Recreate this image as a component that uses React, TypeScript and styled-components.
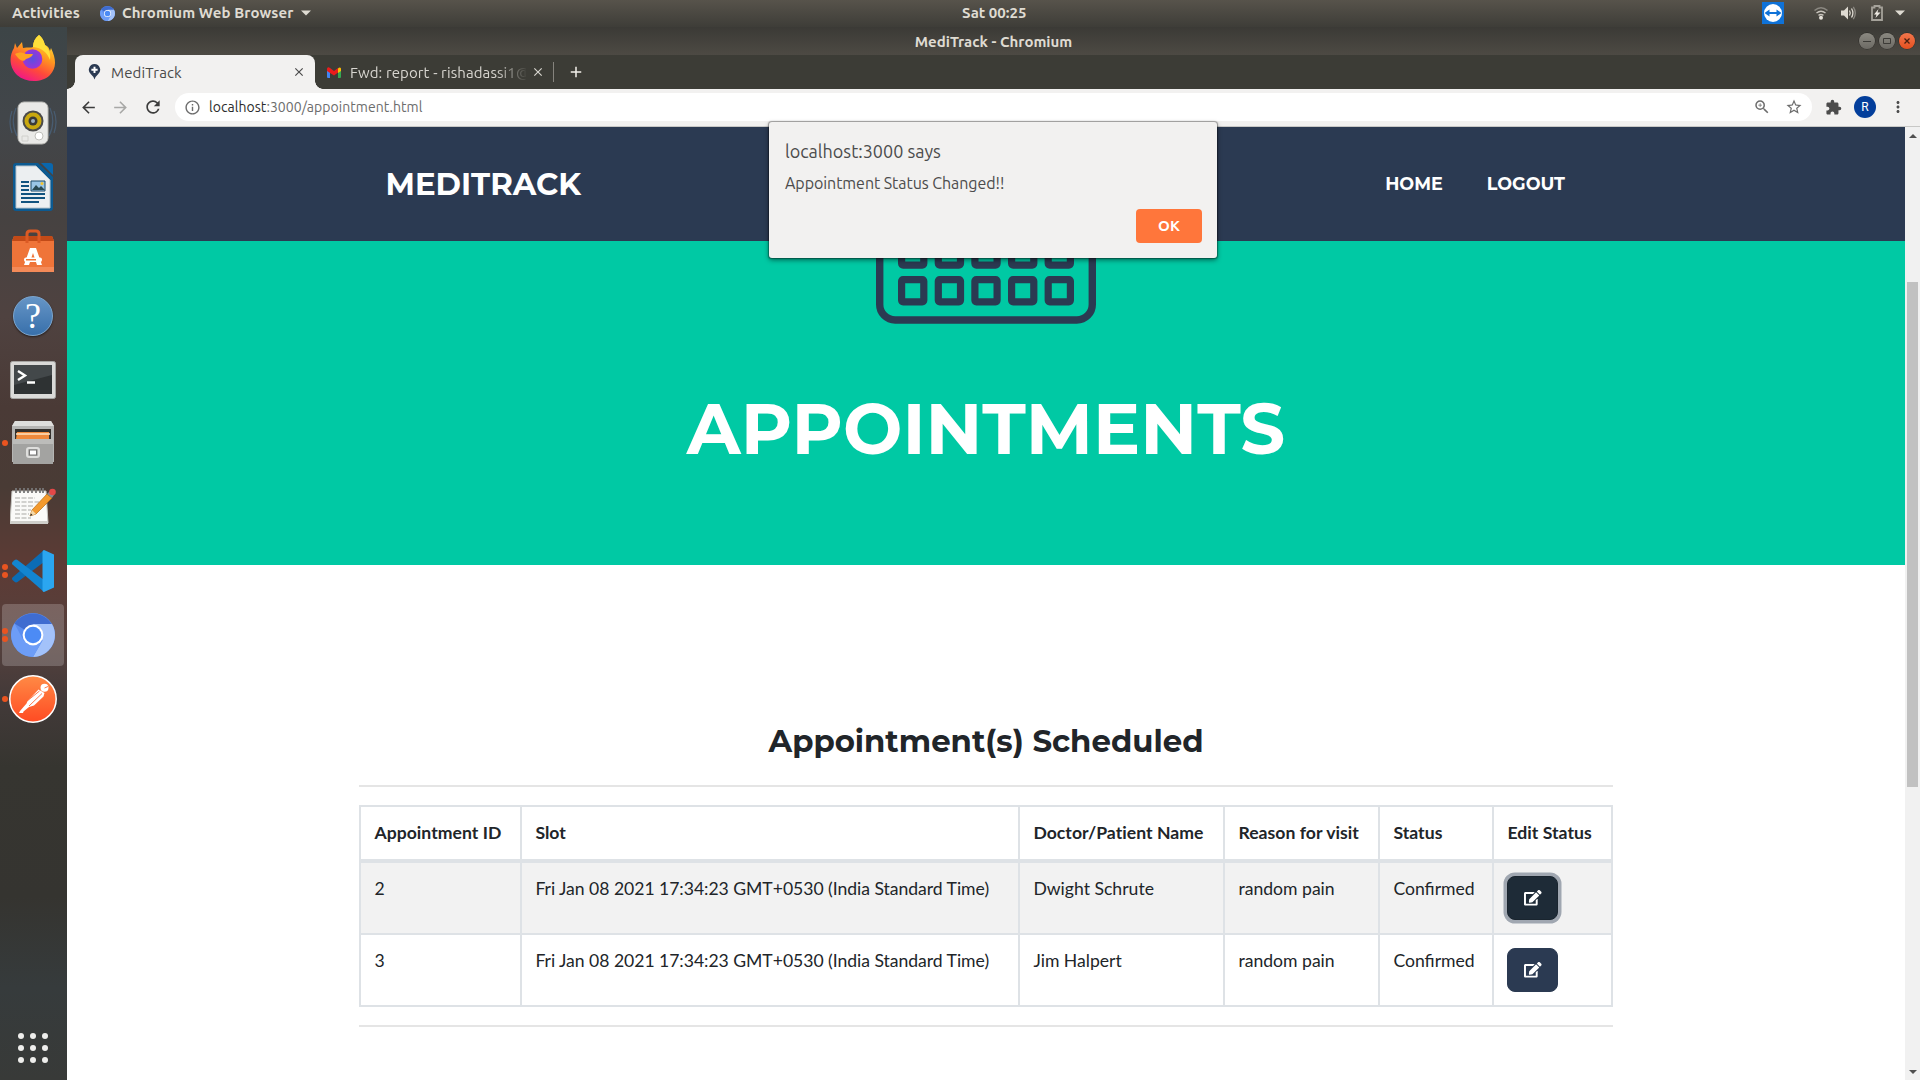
import React from "react";
import styled, { createGlobalStyle, css } from "styled-components";
import { FaEdit } from "react-icons/fa";
import {
  MdArrowBack,
  MdArrowForward,
  MdRefresh,
  MdInfoOutline,
  MdZoomIn,
  MdStarBorder,
  MdExtension,
  MdMoreVert,
  MdClose,
  MdAdd,
} from "react-icons/md";

const system = `Ubuntu, "Noto Sans", sans-serif`;
const display = `Montserrat, Inter, sans-serif`;
const navy = "#2b3a52";
const green = "#00c9a4";

const GlobalStyle = createGlobalStyle`
  *, *::before, *::after { box-sizing: border-box; }
  body { margin: 0; overflow: hidden; }
  svg { display: block; flex: none; }
`;

/* ---------- Desktop shell ---------- */

const Desktop = styled.div`
  width: 1920px;
  height: 1080px;
  display: grid;
  grid-template: 27px 1053px / 67px 1853px;
  overflow: hidden;
  font-family: ${system};
`;

const TopBar = styled.header`
  grid-column: 1 / 3;
  display: grid;
  grid-template-columns: 1fr auto 1fr;
  align-items: center;
  background: linear-gradient(#57534b, #3e3d38);
  color: #dfdbd2;
  font-size: 15px;
  font-weight: 700;
  line-height: 24px;
  padding-bottom: 1px;
  white-space: nowrap;
`;

const TopLeft = styled.div`
  display: flex;
  align-items: center;
  padding-left: 12px;
`;

const TopLabel = styled.span`
  letter-spacing: 0.12px;
`;

const AppMenu = styled.div`
  display: flex;
  align-items: center;
  gap: 7px;
  margin-left: 20px;
`;

const Clock = styled.div`
  width: 66px;
  margin-left: 70px;
`;

const Tray = styled.div`
  display: flex;
  align-items: center;
  justify-content: flex-end;
  padding-right: 15px;
`;

const TrayItem = styled.div<{ $gap: number }>`
  margin-left: ${(p) => p.$gap}px;
`;

const Dock = styled.aside`
  display: flex;
  flex-direction: column;
  background: linear-gradient(
    #3d4547 0,
    #42464a 90px,
    #464241 190px,
    #4f4240 290px,
    #4a3a36 380px,
    #493b35 460px,
    #5d3b35 540px,
    #54403d 620px,
    #433a39 670px,
    #363530 740px,
    #353430 870px,
    #363b3c 960px,
    #383a38 1053px
  );
`;

const Slot = styled.div<{ $active?: boolean }>`
  position: relative;
  height: 64px;
  flex: none;
  display: flex;
  align-items: center;
  justify-content: center;
  padding-right: 1px;
  ${(p) =>
    p.$active &&
    css`
      &::before {
        content: "";
        position: absolute;
        inset: 1px 3px 1px 2px;
        border-radius: 4px;
        background: rgba(255, 255, 255, 0.2);
      }
    `}
  & > svg {
    position: relative;
  }
`;

const Running = styled.div`
  position: absolute;
  left: 2px;
  top: 0;
  height: 64px;
  display: flex;
  flex-direction: column;
  justify-content: center;
  gap: 2px;
`;

const Dot = styled.i`
  width: 6px;
  height: 6px;
  border-radius: 50%;
  background: #e95420;
`;

const AppsGrid = styled.div`
  margin: auto 0 17px 18px;
  display: grid;
  grid-template-columns: repeat(3, 6px);
  gap: 6px;
  i {
    width: 6px;
    height: 6px;
    border-radius: 50%;
    background: #eeeeec;
  }
`;

/* ---------- Browser chrome ---------- */

const Window = styled.main`
  display: flex;
  flex-direction: column;
  position: relative;
  min-width: 0;
`;

const TitleBar = styled.div`
  height: 28px;
  display: grid;
  grid-template-columns: 1fr auto 1fr;
  align-items: center;
  background: linear-gradient(#3b3a36, #4d4a44);
  color: #dfdbd2;
  font-size: 15px;
  font-weight: 700;
  line-height: 27px;
`;

const WindowTitle = styled.div`
  grid-column: 2;
`;

const WindowButtons = styled.div`
  display: flex;
  justify-content: flex-end;
  gap: 4px;
  padding-right: 5px;
`;

const RoundButton = styled.span<{ $close?: boolean }>`
  width: 16px;
  height: 16px;
  border-radius: 50%;
  display: flex;
  align-items: center;
  justify-content: center;
  background: ${(p) =>
    p.$close ? "linear-gradient(#f3764c, #e4501f)" : "linear-gradient(#8b8981, #6c6a64)"};
  box-shadow: 0 0 0 0.5px rgba(0, 0, 0, 0.4);
`;

const TabStrip = styled.div`
  height: 34px;
  display: flex;
  background: #3c3c36;
  font-size: 15px;
  line-height: 33px;
  white-space: nowrap;
`;

const ActiveTab = styled.div`
  position: relative;
  width: 240px;
  margin-left: 8px;
  padding: 0 9px 0 13px;
  display: flex;
  align-items: center;
  border-radius: 8px 8px 0 0;
  background: #f2f1f0;
  color: #4a4a4a;
  letter-spacing: 0.15px;
  &::before,
  &::after {
    content: "";
    position: absolute;
    bottom: 0;
    width: 8px;
    height: 8px;
  }
  &::before {
    left: -8px;
    background: radial-gradient(circle at 0 0, transparent 7.5px, #f2f1f0 8px);
  }
  &::after {
    right: -8px;
    background: radial-gradient(circle at 100% 0, transparent 7.5px, #f2f1f0 8px);
  }
`;

const TabTitle = styled.span`
  flex: 1;
  margin-left: 10px;
`;

const IdleTab = styled.div`
  width: 238px;
  padding: 0 7px 0 12px;
  display: flex;
  align-items: center;
  color: #d8d6d0;
`;

const FadedTitle = styled.span`
  width: 176px;
  margin: 0 5px 0 9px;
  overflow: hidden;
  letter-spacing: 0.1px;
  mask-image: linear-gradient(90deg, #000 146px, transparent 178px);
`;

const TabDivider = styled.span`
  width: 1px;
  height: 20px;
  margin-top: 7px;
  background: #85837d;
`;

const NewTab = styled.span`
  display: flex;
  align-items: center;
  margin-left: 13px;
  color: #f2f0ea;
`;

const Toolbar = styled.div`
  height: 38px;
  display: flex;
  align-items: center;
  padding: 0 13px 1px 12px;
  background: #f2f1f0;
  border-bottom: 1px solid #c8c8c6;
  color: #4c4c4c;
`;

const NavButton = styled.span<{ $dim?: boolean }>`
  display: flex;
  width: 18px;
  margin-right: 14px;
  color: ${(p) => (p.$dim ? "#a8a8a6" : "#3c3c3c")};
`;

const AddressBar = styled.div`
  flex: 1;
  height: 28px;
  margin-right: 13px;
  padding: 0 9px 0 9px;
  display: flex;
  align-items: center;
  border-radius: 14px;
  background: #fff;
  color: #6c6c6c;
  font-size: 14px;
  line-height: 26px;
`;

const Url = styled.span`
  flex: 1;
  margin-left: 8px;
  letter-spacing: 0.05px;
  b {
    font-weight: 400;
    color: #2c2c2c;
  }
`;

const BarIcon = styled.span`
  margin-left: 14px;
`;

const Avatar = styled.span`
  width: 22px;
  height: 22px;
  margin: 0 13px 0 12px;
  border-radius: 50%;
  display: flex;
  align-items: center;
  justify-content: center;
  background: #033e9b;
  color: #fff;
  font: 12px Roboto, sans-serif;
`;

/* ---------- Web page ---------- */

const Viewport = styled.div`
  flex: 1;
  min-height: 0;
  display: flex;
`;

const Page = styled.div`
  width: 1838px;
  overflow: hidden;
  background: #fff;
  color: #212529;
  font: 17.6px/26.4px Lato, sans-serif;
`;

const NavBar = styled.nav`
  height: 114px;
  padding: 0 340px 0 318.500px;
  display: flex;
  align-items: center;
  background: ${navy};
  color: #fff;
  font-family: ${display};
  font-weight: 700;
`;

const Brand = styled.a`
  flex: 1;
  font-size: 30.8px;
`;

const NavLink = styled.a`
  margin-left: 44px;
  font-size: 17.6px;
`;

const Hero = styled.section`
  height: 324px;
  display: flex;
  flex-direction: column;
  align-items: center;
  background: ${green};
  color: #fff;
`;

const HeroTitle = styled.h1`
  margin: 65px 0 0;
  font: 700 70.4px/80px ${display};
`;

const Section = styled.section`
  width: 1254px;
  margin: 0 auto;
  padding-top: 156px;
`;

const SectionTitle = styled.h2`
  margin: 0;
  text-align: center;
  font: 700 30.8px/40px ${display};
`;

const Rule = styled.hr<{ $top: number }>`
  height: 2px;
  border: 0;
  margin: ${(p) => p.$top}px 0 18px;
  background: #e5e5e5;
`;

const Table = styled.table`
  width: 1254px;
  table-layout: fixed;
  border-collapse: separate;
  border-spacing: 0;
  border-top: 2px solid #dee2e6;
  border-right: 2px solid #dee2e6;
`;

const HeadCell = styled.th<{ $w: number }>`
  width: ${(p) => p.$w}px;
  height: 56px;
  padding: 0 0 0 13.4px;
  text-align: left;
  letter-spacing: 0.04px;
  white-space: nowrap;
  border-left: 2px solid #dee2e6;
  border-bottom: 4px solid #dee2e6;
`;

const BodyRow = styled.tr<{ $striped: boolean }>`
  background: ${(p) => (p.$striped ? "#f2f2f2" : "#fff")};
`;

const Cell = styled.td`
  height: 72px;
  padding: 13px 0 13px 13.4px;
  vertical-align: top;
  white-space: nowrap;
  border-left: 2px solid #dee2e6;
  border-bottom: 2px solid #dee2e6;
`;

const SlotText = styled.span`
  letter-spacing: -0.035px;
`;

const EditButton = styled.button<{ $focused: boolean }>`
  width: 51px;
  height: 44px;
  padding: 0;
  display: flex;
  align-items: center;
  justify-content: center;
  border: 1px solid ${(p) => (p.$focused ? "#1a252f" : navy)};
  border-radius: 8px;
  background: ${(p) => (p.$focused ? "#1e2b37" : navy)};
  color: #fff;
  font-size: 17.6px;
  box-shadow: ${(p) => (p.$focused ? "0 0 0 3.5px #a0a7b1" : "none")};
`;

const Scrollbar = styled.div`
  width: 15px;
  display: flex;
  flex-direction: column;
  align-items: center;
  background: #f1f1f1;
`;

const Thumb = styled.div`
  width: 11px;
  height: 505px;
  margin: 144px 0 auto;
  background: #c1c1c1;
`;

const ArrowBox = styled.div`
  height: 11px;
  display: flex;
  align-items: flex-end;
`;

/* ---------- Alert ---------- */

const Alert = styled.div`
  position: absolute;
  left: 702px;
  top: 95px;
  width: 448px;
  height: 136px;
  padding: 17px 15px 15px 16px;
  display: flex;
  flex-direction: column;
  border-radius: 3px;
  background: #f2f1f0;
  box-shadow: 0 0 1px 0.5px rgba(0, 0, 0, 0.3), 0 2px 5px rgba(0, 0, 0, 0.5);
  color: #4c4c4c;
`;

const AlertOrigin = styled.div`
  font-size: 18px;
  line-height: 24px;
`;

const AlertMessage = styled.div`
  margin-top: 8px;
  font-size: 16px;
  line-height: 24px;
  letter-spacing: -0.06px;
`;

const OkButton = styled.button`
  width: 66px;
  height: 34px;
  margin: auto 0 0 auto;
  padding: 0;
  border: 0;
  border-radius: 4px;
  background: #ff763b;
  color: #fff;
  font: 700 15px/32px ${system};
`;

/* ---------- Drawings ---------- */

const ChromiumIcon = ({ size }: { size: number }) => (
  <svg width={size} height={size} viewBox="0 0 44 44">
    <circle cx="22" cy="22" r="22" fill="#5b8def" />
    <path d="M22 22 L3.5 10.5 A22 22 0 0 1 40.6 11 Z" fill="#3f6cd0" />
    <path d="M22 11 L41 11 A22 22 0 0 1 22 44 L31.5 27.5 Z" fill="#a3c2fa" />
    <path d="M3.5 10.5 L12.5 27.5 L22 33 L31.5 27.5 L22 44 A22 22 0 0 1 3.5 10.5Z" fill="#6d9df7" />
    <circle cx="22" cy="22" r="10.4" fill="#fff" />
    <circle cx="22" cy="22" r="8.3" fill="#4c8bf5" />
  </svg>
);

const Caret = () => (
  <svg width="10" height="6" viewBox="0 0 10 6">
    <path d="M0 .5h10L5 5.5z" fill="#dfdbd2" />
  </svg>
);

const FirefoxIcon = () => (
  <svg width="46" height="50" viewBox="0 0 46 50">
    <defs>
      <linearGradient id="fx" x1=".8" y1="0" x2=".3" y2="1">
        <stop offset="0" stopColor="#fff03f" />
        <stop offset=".4" stopColor="#ff9a1f" />
        <stop offset=".7" stopColor="#ff4a3a" />
        <stop offset="1" stopColor="#f0148c" />
      </linearGradient>
      <radialGradient id="fxg">
        <stop offset="0" stopColor="#5a4fe0" />
        <stop offset="1" stopColor="#9a35d8" />
      </radialGradient>
    </defs>
    <path
      d="M29 1c4 3 5 7 6 10 3 1 4 3 5 6l1-3c6 13 5 20-1 27-8 8-24 8-33 0C-1 33-1 22 4 14l1-5 2 5 5-6 1 6c5-1 8 0 10-1 0-5 2-9 6-12z"
      fill="url(#fx)"
    />
    <circle cx="22.500" cy="25" r="9.800" fill="url(#fxg)" />
    <path d="M23 13c0-5 2-9 6-12 4 3 5 7 6 10 4 4 6 9 5 15-3-8-8-12-17-13z" fill="#ffe03a" />
    <path d="M5 20c4-2 7-2 11 0h7c-1 3-4 4-7 5-3 4-7 1-11-5z" fill="#ffa321" />
  </svg>
);

const SpeakerIcon = () => (
  <svg width="50" height="44" viewBox="0 0 50 44">
    <g fill="none" stroke="#4f6f91" strokeWidth="1.200" opacity=".55">
      <path d="M8 7q-6 14 1 28M4 10q-4 11 0 22M42 7q6 14-1 28M46 10q4 11 0 22" />
    </g>
    <rect x="10" y="1" width="30" height="42" rx="6" fill="#e9e9e7" stroke="#b9b9b5" />
    <circle cx="25" cy="20" r="10.500" fill="#4a4a4a" />
    <circle cx="25" cy="20" r="8.500" fill="#c9a80f" />
    <circle cx="25" cy="20" r="4.500" fill="#3a3a38" />
    <circle cx="25" cy="20" r="2" fill="#9db0c0" />
    <circle cx="31" cy="35" r="4" fill="#fff" stroke="#c0c0bc" />
    <path d="M14 35h6v5h-6z" fill="none" stroke="#d0d0cc" />
  </svg>
);

const WriterIcon = () => (
  <svg width="40" height="48" viewBox="0 0 40 48">
    <path d="M3 0h22l15 14v31q0 3-3 3H3q-3 0-3-3V3q0-3 3-3z" fill="#0c5a91" />
    <path d="M28 0h9q3 0 3 3v9z" fill="#0a67ad" />
    <path d="M3 3h20l14 14v28H3z" fill="#eceff1" stroke="#b7c3cb" />
    <g fill="#11537f">
      <path d="M8 18h8v2H8zM8 22h8v2H8zM8 26h8v2H8zM8 30h24v2H8zM8 34h24v2H8zM8 38h18v2H8z" />
    </g>
    <path d="M18 18h14v10H18z" fill="#9ac6e6" stroke="#1c4a68" />
    <path d="M19 27l4-5 3 3 2-2 4 4z" fill="#2a4a52" />
    <circle cx="29" cy="20.500" r="1.500" fill="#f4c430" />
  </svg>
);

const SoftwareIcon = () => (
  <svg width="42" height="44" viewBox="0 0 42 44">
    <path d="M2 7h38l2 5v31H0V12z" fill="#ef7439" />
    <path d="M2 7h38l2 5H0z" fill="#c24a17" />
    <path d="M15 14V5q0-3 3-3h6q3 0 3 3v9" fill="none" stroke="#dc5a24" strokeWidth="3" />
    <path d="M12 36l6-17h6l6 17h-5l-4-12-4 12z" fill="#fff" />
    <rect x="12" y="28.500" width="18" height="4.500" rx="2" fill="#fff" />
    <rect x="14" y="30" width="10" height="1.500" fill="#ef7439" />
    <path d="M0 38h42v5H0z" fill="#f48a58" />
  </svg>
);

const HelpBadge = styled.span`
  width: 40px;
  height: 40px;
  margin-top: 2px;
  border-radius: 50%;
  border: 1px solid #7ba6cf;
  background: linear-gradient(#6695c6, #3870ab);
  box-shadow: 0 1px 2px rgba(0, 0, 0, 0.5);
  color: #fff;
  font: 36px/38px "Liberation Serif", serif;
  text-align: center;
`;

const TerminalIcon = () => (
  <svg width="46" height="40" viewBox="0 -2 46 40">
    <rect x=".5" y=".5" width="45" height="37" rx="2" fill="#dadad8" stroke="#a5a5a2" />
    <rect x="4" y="4" width="38" height="29" fill="#2e3233" />
    <path d="M4 4h38v10L4 24z" fill="#43484a" />
    <path d="M8 10l7 4.500-7 4.500M17 21.500h8" fill="none" stroke="#fff" strokeWidth="2.400" />
  </svg>
);

const FilesIcon = () => (
  <svg width="42" height="44" viewBox="0 0 42 44">
    <path d="M3 0h36l3 5v36H0V5z" fill="#b5b5b3" />
    <path d="M3 0h36l3 5H0z" fill="#dededc" />
    <path d="M3 8h36v11H3z" fill="#33302c" />
    <path d="M5 11h32v7H4z" fill="#ef8a3c" />
    <path d="M4 13h34" stroke="#ffe3c2" strokeWidth="1.500" />
    <path d="M1 18h40v25H1z" fill="#a3a3a1" />
    <path d="M1 18h40v5H1z" fill="#bcbcba" />
    <rect x="15" y="27" width="12" height="9" rx="2" fill="#b0b0ae" stroke="#dededc" strokeWidth="2" />
    <rect x="17.500" y="29" width="7" height="5" fill="#fff" stroke="#777" />
  </svg>
);

const NotesIcon = () => (
  <svg width="46" height="38" viewBox="0 1 46 38">
    <path d="M2 4h34l2 32H0z" fill="#fafaf8" stroke="#c5c5c0" />
    <path d="M0 34h38v3H0z" fill="#cfcfcb" />
    <path
      d="M6 1v5M10 1v5M14 1v5M18 1v5M22 1v5M26 1v5M30 1v5M33 1v5"
      stroke="#777"
      strokeWidth="1.800"
    />
    <path
      d="M5 11h20M5 15h24M5 19h18M5 23h16M5 27h14M5 31h16"
      stroke="#a9a9a5"
      strokeDasharray="5 1.500"
    />
    <path d="M20 29l2-6L37 7l5 4-16 16z" fill="#f39a2e" stroke="#b96a10" strokeWidth=".7" />
    <path d="M20 29l2-6 4 4z" fill="#f5d9a8" />
    <path d="M20 29l1-2.500 1.500 1.500z" fill="#222" />
    <path d="M37 7l3-3 4 4-2 3z" fill="#8c8c8c" />
    <circle cx="42.500" cy="5" r="3.300" fill="#e24848" />
  </svg>
);

const CodeIcon = () => (
  <svg width="42" height="42" viewBox="0 0 42 42">
    <path d="M32 0v12L5.500 32Q4 33 2.500 31.800L.5 30q-1-1.500 0-2.500z" fill="#0b6cb5" />
    <path d="M32 42V30L5.500 10Q4 9 2.500 10.200L.5 12q-1 1.500 0 2.500z" fill="#1285d1" />
    <path d="M32 0l10 4.500v33L32 42q-1.500 0-1.500-2V2q0-1.500 1.500-2z" fill="#2ba6f0" />
  </svg>
);

const PostmanIcon = () => (
  <svg width="48" height="48" viewBox="0 0 48 48">
    <defs>
      <linearGradient id="pm" x1="0" y1="0" x2="0" y2="1">
        <stop offset="0" stopColor="#ff8a45" />
        <stop offset="1" stopColor="#ff4b23" />
      </linearGradient>
    </defs>
    <circle cx="24" cy="24" r="23.200" fill="url(#pm)" stroke="#fff" strokeWidth="1.500" />
    <circle cx="35.500" cy="12.800" r="4" fill="#fff" />
    <path d="M29.500 14.500l6 3.500-1 3.500-9.500 9-5 1.500-5.500 4.500-.5 1.500h-4l1-2 6.500-7.500 1-2.500z" fill="#fff" />
    <path d="M17.500 26.500l13-10.500M33 18.500L20 31M35.500 13l3.500-1.500" stroke="#ff6a35" strokeWidth=".9" />
  </svg>
);

const RemoteIcon = () => (
  <svg width="22" height="22" viewBox="0 0 22 22">
    <rect width="22" height="22" fill="#0f72d8" />
    <circle cx="11" cy="11" r="9" fill="#fff" />
    <path d="M2.500 11l5-3.500v2.500h7V7.500l5 3.500-5 3.500V12h-7v2.500z" fill="#0f72d8" />
  </svg>
);

const WifiIcon = () => (
  <svg width="14" height="14" viewBox="0 0 14 14">
    <path d="M.5 4.500q6.500-5.500 13 0" fill="none" stroke="#8b8881" strokeWidth="1.500" />
    <path d="M2.500 7q4.500-3.500 9 0M4.500 9.300q2.500-1.700 5 0" fill="none" stroke="#c9c5bd" strokeWidth="1.400" />
    <circle cx="7" cy="11.800" r="2" fill="#e6e2da" />
  </svg>
);

const VolumeIcon = () => (
  <svg width="15" height="14" viewBox="0 0 15 14">
    <path d="M0 4.500h3L7 .5v13l-4-4H0z" fill="#dfdbd2" />
    <path d="M8.500 4.500q1.500 2.500 0 5M10.500 2.500q2.800 4.500 0 9" fill="none" stroke="#dfdbd2" strokeWidth="1.300" />
    <path d="M12.300.8q4 6.200 0 12.400" fill="none" stroke="#8b8881" strokeWidth="1.300" />
  </svg>
);

const BatteryIcon = () => (
  <svg width="12" height="16" viewBox="0 0 12 16">
    <path d="M1 2.500h2.500v-1.500h5v1.500H11v12.500H1z" fill="none" stroke="#a5a29a" strokeWidth="1.800" />
    <path d="M7.500 4L3 9.500h2.500L4.500 13 9.500 7.500H6.500z" fill="#eeeae2" />
  </svg>
);

const PinIcon = () => (
  <svg width="13" height="16" viewBox="0 0 13 18">
    <path d="M6.500 0a6.500 6.500 0 0 1 4 11.500q-3 2.500-4 6-1-3.500-4-6A6.500 6.500 0 0 1 6.500 0z" fill={navy} />
    <path d="M6.500 3v7M3 6.500h7" stroke="#fff" strokeWidth="2.200" />
  </svg>
);

const MailIcon = () => (
  <svg width="14" height="11" viewBox="0 0 14 11">
    <path d="M0 2h3v9H1q-1 0-1-1z" fill="#4285f4" />
    <path d="M11 2h3v8q0 1-1 1h-2z" fill="#34a853" />
    <path d="M11 1.500q2-2 3 0V4l-3 2z" fill="#fbbc04" />
    <path d="M0 1.500q1-2 3-.5l4 3 4-3v4.500L7 8.500 0 4z" fill="#ea1c1c" />
  </svg>
);

const CalendarArt = () => (
  <svg width="220" height="83" viewBox="0 0 220 83">
    <path
      d="M3.700 0V63.500a15.500 15.500 0 0 0 15.500 15.500H200.800a15.500 15.500 0 0 0 15.500-15.500V0"
      fill="none"
      stroke={navy}
      strokeWidth="7.400"
    />
    {[-1.7, 35].map((y) =>
      [22, 58.7, 95.3, 132, 168.6].map((x) => (
        <rect
          key={`${x}-${y}`}
          x={x + 3.6}
          y={y + 3.6}
          width="22.200"
          height="22.200"
          rx="1.500"
          fill="none"
          stroke={navy}
          strokeWidth="7.200"
        />
      ))
    )}
  </svg>
);

/* ---------- Data ---------- */

const dock: { name: string; icon: React.ReactNode; windows?: number; active?: boolean }[] = [
  { name: "firefox", icon: <FirefoxIcon /> },
  { name: "music", icon: <SpeakerIcon /> },
  { name: "writer", icon: <WriterIcon /> },
  { name: "software", icon: <SoftwareIcon /> },
  { name: "help", icon: <HelpBadge>?</HelpBadge> },
  { name: "terminal", icon: <TerminalIcon /> },
  { name: "files", icon: <FilesIcon />, windows: 1 },
  { name: "notes", icon: <NotesIcon /> },
  { name: "code", icon: <CodeIcon />, windows: 2 },
  { name: "chromium", icon: <ChromiumIcon size={44} />, windows: 2, active: true },
  { name: "postman", icon: <PostmanIcon />, windows: 1 },
];

const columns: [string, number][] = [
  ["Appointment ID", 161],
  ["Slot", 498],
  ["Doctor/Patient Name", 205],
  ["Reason for visit", 155],
  ["Status", 114],
  ["Edit Status", 119],
];

const slotTime = "Fri Jan 08 2021 17:34:23 GMT+0530 (India Standard Time)";

const appointments = [
  { id: 2, slot: slotTime, name: "Dwight Schrute", reason: "random pain", status: "Confirmed" },
  { id: 3, slot: slotTime, name: "Jim Halpert", reason: "random pain", status: "Confirmed" },
];

export default function App() {
  return (
    <Desktop>
      <GlobalStyle />
      <TopBar>
        <TopLeft>
          <TopLabel>Activities</TopLabel>
          <AppMenu>
            <ChromiumIcon size={15} />
            <TopLabel>Chromium Web Browser</TopLabel>
            <Caret />
          </AppMenu>
        </TopLeft>
        <Clock>Sat 00:25</Clock>
        <Tray>
          <RemoteIcon />
          <TrayItem $gap={30}><WifiIcon /></TrayItem>
          <TrayItem $gap={13}><VolumeIcon /></TrayItem>
          <TrayItem $gap={15}><BatteryIcon /></TrayItem>
          <TrayItem $gap={12}><Caret /></TrayItem>
        </Tray>
      </TopBar>

      <Dock>
        {dock.map((d) => (
          <Slot key={d.name} $active={d.active}>
            {d.windows && (
              <Running>
                {Array.from({ length: d.windows }, (_, i) => <Dot key={i} />)}
              </Running>
            )}
            {d.icon}
          </Slot>
        ))}
        <AppsGrid>
          {Array.from({ length: 9 }, (_, i) => <i key={i} />)}
        </AppsGrid>
      </Dock>

      <Window>
        <TitleBar>
          <WindowTitle>MediTrack - Chromium</WindowTitle>
          <WindowButtons>
            <RoundButton>
              <svg width="8" height="8"><path d="M0 4.500h8" stroke="#3c3b37" /></svg>
            </RoundButton>
            <RoundButton>
              <svg width="8" height="8"><path d="M.5 1.500h7v5h-7z" fill="none" stroke="#3c3b37" /></svg>
            </RoundButton>
            <RoundButton $close>
              <svg width="8" height="8"><path d="M1.500 1.500l5 5M6.500 1.500l-5 5" stroke="#4a2010" strokeWidth="1.300" /></svg>
            </RoundButton>
          </WindowButtons>
        </TitleBar>

        <TabStrip>
          <ActiveTab>
            <PinIcon />
            <TabTitle>MediTrack</TabTitle>
            <MdClose size={14} />
          </ActiveTab>
          <IdleTab>
            <MailIcon />
            <FadedTitle>Fwd: report - rishadassi1@</FadedTitle>
            <MdClose size={14} />
          </IdleTab>
          <TabDivider />
          <NewTab><MdAdd size={18} /></NewTab>
        </TabStrip>

        <Toolbar>
          <NavButton><MdArrowBack size={19} /></NavButton>
          <NavButton $dim><MdArrowForward size={19} /></NavButton>
          <NavButton><MdRefresh size={20} /></NavButton>
          <AddressBar>
            <MdInfoOutline size={17} />
            <Url><b>localhost</b>:3000/appointment.html</Url>
            <MdZoomIn size={18} />
            <BarIcon><MdStarBorder size={18} /></BarIcon>
          </AddressBar>
          <MdExtension size={17} />
          <Avatar>R</Avatar>
          <MdMoreVert size={18} />
        </Toolbar>

        <Viewport>
          <Page>
            <NavBar>
              <Brand>MEDITRACK</Brand>
              <NavLink>HOME</NavLink>
              <NavLink>LOGOUT</NavLink>
            </NavBar>
            <Hero>
              <CalendarArt />
              <HeroTitle>APPOINTMENTS</HeroTitle>
            </Hero>
            <Section>
              <SectionTitle>Appointment(s) Scheduled</SectionTitle>
              <Rule $top={24} />
              <Table>
                <thead>
                  <tr>
                    {columns.map(([label, w]) => <HeadCell key={label} $w={w}>{label}</HeadCell>)}
                  </tr>
                </thead>
                <tbody>
                  {appointments.map((a, i) => (
                    <BodyRow key={a.id} $striped={i % 2 === 0}>
                      <Cell>{a.id}</Cell>
                      <Cell><SlotText>{a.slot}</SlotText></Cell>
                      <Cell>{a.name}</Cell>
                      <Cell>{a.reason}</Cell>
                      <Cell>{a.status}</Cell>
                      <Cell>
                        <EditButton $focused={i === 0}><FaEdit /></EditButton>
                      </Cell>
                    </BodyRow>
                  ))}
                </tbody>
              </Table>
              <Rule $top={18} />
            </Section>
          </Page>
          <Scrollbar>
            <ArrowBox>
              <svg width="8" height="4"><path d="M0 4h8L4 0z" fill="#505050" /></svg>
            </ArrowBox>
            <Thumb />
            <ArrowBox>
              <svg width="8" height="10"><path d="M0 0h8L4 4z" fill="#505050" /></svg>
            </ArrowBox>
          </Scrollbar>
        </Viewport>

        <Alert>
          <AlertOrigin>localhost:3000 says</AlertOrigin>
          <AlertMessage>Appointment Status Changed!!</AlertMessage>
          <OkButton>OK</OkButton>
        </Alert>
      </Window>
    </Desktop>
  );
}
